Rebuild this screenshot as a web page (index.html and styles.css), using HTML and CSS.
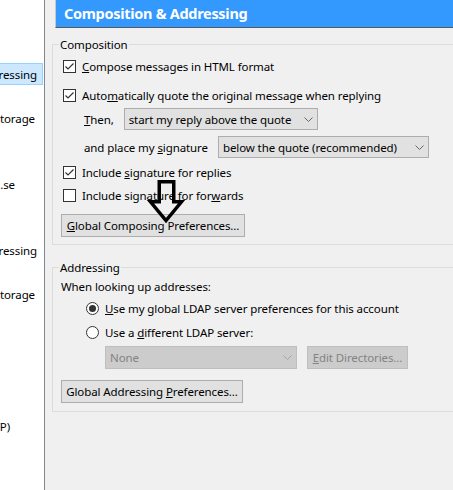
FILE: index.html
```html
<!DOCTYPE html>
<html lang="en">
<head>
<meta charset="utf-8">
<title>Composition &amp; Addressing</title>
<link rel="stylesheet" href="styles.css">
</head>
<body>
<div class="window">
  <nav class="tree">
    <div class="row selected end37"><span>Composition &amp; Addressing</span></div>
    <div class="row"></div>
    <div class="row end35"><span>Synchronization &amp; Storage</span></div>
    <div class="row"></div>
    <div class="row"></div>
    <div class="row end15"><span>user@example.se</span></div>
    <div class="row"></div>
    <div class="row"></div>
    <div class="row end37"><span>Composition &amp; Addressing</span></div>
    <div class="row"></div>
    <div class="row end35"><span>Synchronization &amp; Storage</span></div>
    <div class="row"></div>
    <div class="row"></div>
    <div class="row"></div>
    <div class="row"></div>
    <div class="row"></div>
    <div class="row end10"><span>Outgoing Server (SMTP)</span></div>
  </nav>
  <main class="pane">
    <h1 class="title">Composition &amp; Addressing</h1>

    <fieldset class="group compose">
      <legend>Composition</legend>
      <label class="check">
        <span class="box"><svg width="11" height="11" viewBox="0 0 11 11"><polyline points="1.5,5.5 4,8 9.5,2.5" /></svg></span>
        <span><u>C</u>ompose messages in HTML format</span>
      </label>
      <label class="check m-quote">
        <span class="box"><svg width="11" height="11" viewBox="0 0 11 11"><polyline points="1.5,5.5 4,8 9.5,2.5" /></svg></span>
        <span>Auto<u>m</u>atically quote the original message when replying</span>
      </label>
      <div class="field m-then">
        <span><u>T</u>hen,</span>
        <div class="select w-reply"><span>start my reply above the quote</span><svg class="chev" width="9" height="5" viewBox="0 0 9 5"><polyline points="0.5,0.5 4.5,4.5 8.5,0.5" /></svg></div>
      </div>
      <div class="field m-sig">
        <span>and place my <u>s</u>ignature</span>
        <div class="select w-sig"><span>below the quote (recommended)</span><svg class="chev" width="9" height="5" viewBox="0 0 9 5"><polyline points="0.5,0.5 4.5,4.5 8.5,0.5" /></svg></div>
      </div>
      <label class="check m-replies">
        <span class="box"><svg width="11" height="11" viewBox="0 0 11 11"><polyline points="1.5,5.5 4,8 9.5,2.5" /></svg></span>
        <span>Include <u>s</u>ignature for replies</span>
      </label>
      <label class="check m-forwards">
        <span class="box"></span>
        <span>Include signature for for<u>w</u>ards</span>
      </label>
      <button class="btn w-compose m-compose-btn" type="button"><u>G</u>lobal Composing Preferences...</button>
    </fieldset>

    <fieldset class="group address">
      <legend>Addressing</legend>
      <div class="lookup">When looking up addresses:</div>
      <label class="radio m-r1">
        <span class="circle"><span class="dot"></span></span>
        <span><u>U</u>se my global LDAP server preferences for this account</span>
      </label>
      <label class="radio m-r2">
        <span class="circle"></span>
        <span>Use a <u>d</u>ifferent LDAP server:</span>
      </label>
      <div class="ldap">
        <div class="select disabled w-none"><span>None</span><svg class="chev" width="9" height="5" viewBox="0 0 9 5"><polyline points="0.5,0.5 4.5,4.5 8.5,0.5" /></svg></div>
        <button class="btn disabled w-edit" type="button" disabled><u>E</u>dit Directories...</button>
      </div>
      <button class="btn w-address m-address-btn" type="button">Global Addressing <u>P</u>references...</button>
    </fieldset>
  </main>
</div>

<svg class="pointer" width="42" height="50" viewBox="0 0 42 50" aria-hidden="true">
  <path d="M14.25 4.75 H28.75 V24.75 H36.5 L21 43.5 L5.5 24.75 H14.25 Z" />
</svg>
</body>
</html>
```

FILE: styles.css
```css
html, body {
  margin: 0;
  height: 100%;
  overflow: hidden;
}

body {
  position: relative;
  background: #f0f0f0;
  font-family: "Noto Sans", "Liberation Sans", sans-serif;
  font-size: 11.5px;
  letter-spacing: -0.1px;
  color: #000;
}

.window {
  display: flex;
  width: 480px;
  height: 490px;
}

/* left account tree */
.tree {
  flex: none;
  width: 44px;
  background: #fff;
  border-right: 1px solid #828790;
  padding-top: 63px;
}

.row {
  box-sizing: border-box;
  width: 43px;
  height: 22px;
  display: flex;
  align-items: center;
  justify-content: flex-end;
  overflow: hidden;
  white-space: nowrap;
  border: 1px solid transparent;
  border-left: 0;
}

.row span { flex: none; }

.row.selected {
  background: #cce8ff;
  border-color: #99d1ff;
}

.end37 { padding-right: 5px; }
.end35 { padding-right: 7px; }
.end15 { padding-right: 27px; }
.end10 { padding-right: 32px; }

/* right pane */
.pane {
  flex: 1;
  display: flex;
  flex-direction: column;
}

.title {
  box-sizing: border-box;
  margin: 0 0 0 10px;
  height: 28px;
  padding-left: 8px;
  background: #3399ff;
  border-left: 1px solid #c8c8c8;
  border-bottom: 1px solid #595959;
  color: #fff;
  font-size: 14.5px;
  letter-spacing: -0.3px;
  font-weight: 700;
  line-height: 27px;
  white-space: nowrap;
}

.group {
  margin: 8px 0 0 7px;
  padding: 3px 0 7px 8px;
  border: 1px solid #dcdcdc;
  min-width: 0;
}

.group.address {
  margin-top: 14px;
  padding: 2px 0 8px 8px;
}

.group legend {
  margin-left: -2px;
  padding: 0 1px;
  line-height: 17px;
}

/* buttons (base before modifiers) */
.btn {
  display: block;
  box-sizing: border-box;
  height: 23px;
  padding: 0;
  margin: 0;
  background: #e1e1e1;
  border: 1px solid #adadad;
  border-radius: 0;
  font: inherit;
  letter-spacing: inherit;
  color: #000;
  text-align: center;
  white-space: nowrap;
}

.w-compose { width: 184px; }
.w-address { width: 182px; }
.w-edit { width: 101px; }

.check,
.radio {
  display: flex;
  align-items: center;
  gap: 6px;
  height: 20px;
  white-space: nowrap;
}

.check { margin-left: 2px; }
.radio { margin-left: 25px; }

.box {
  box-sizing: border-box;
  flex: none;
  width: 13px;
  height: 13px;
  border: 1px solid #333;
  background: #fff;
  display: flex;
}

.box polyline {
  fill: none;
  stroke: #333;
  stroke-width: 1.2;
}

.circle {
  box-sizing: border-box;
  flex: none;
  width: 13px;
  height: 13px;
  border: 1px solid #333;
  border-radius: 50%;
  background: #fff;
  display: flex;
  align-items: center;
  justify-content: center;
}

.dot {
  width: 7px;
  height: 7px;
  border-radius: 50%;
  background: #333;
}

.m-quote { margin-top: 9px; }
.m-then { margin-top: 3px; }
.m-sig { margin-top: 6px; }
.m-replies { margin-top: 4px; }
.m-forwards { margin-top: 3px; }
.btn.m-compose-btn { margin-top: 9px; }

.field {
  display: flex;
  align-items: center;
  gap: 10px;
  height: 22px;
  padding-left: 23px;
  white-space: nowrap;
}

.select {
  box-sizing: border-box;
  flex: none;
  height: 22px;
  display: flex;
  align-items: center;
  justify-content: space-between;
  padding: 0 4px 0 4px;
  background: #e1e1e1;
  border: 1px solid #adadad;
  white-space: nowrap;
}

.chev polyline {
  fill: none;
  stroke: #666;
  stroke-width: 1;
}

.w-reply { width: 194px; }
.w-sig { width: 211px; }
.w-none { width: 192px; height: 23px; }

.lookup {
  height: 18px;
  line-height: 18px;
  white-space: nowrap;
}

.m-r1 { margin-top: 2px; }
.m-r2 { margin-top: 4px; }

.ldap {
  display: flex;
  align-items: center;
  gap: 10px;
  margin-top: 4px;
  padding-left: 44px;
}

.disabled {
  background: #cccccc;
  border-color: #bfbfbf;
  color: #838383;
}

.disabled .chev polyline { stroke: #a6a6a6; }

.btn.m-address-btn { margin-top: 11px; }

/* annotation arrow drawn over the dialog */
.pointer {
  position: absolute;
  left: 145px;
  top: 177px;
}

.pointer path {
  fill: none;
  stroke: #000;
  stroke-width: 3.5;
  stroke-linejoin: miter;
}
```
